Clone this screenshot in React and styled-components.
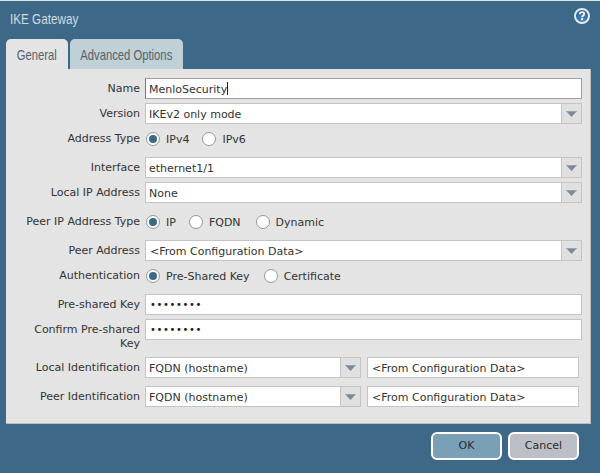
import { createGlobalStyle } from "styled-components";
import styled from "styled-components";

const GlobalStyle = createGlobalStyle`
  html, body {
    margin: 0;
    padding: 0;
    background: #3e6888;
  }
  body {
    font-family: "DejaVu Sans", sans-serif;
    font-size: 11px;
    color: #333;
  }
`;

const Dialog = styled.div`
  width: 600px;
  height: 473px;
  box-sizing: border-box;
  border-top: 1px solid #dfe6ea;
  background: #3e6888;
  overflow: hidden;
  display: flex;
  flex-direction: column;
`;

const Header = styled.div`
  height: 38px;
  padding: 0 10px;
  display: flex;
  justify-content: space-between;
  align-items: flex-start;
`;

// the original uses a condensed face, none is installed so squeeze Liberation Sans
const Narrow = styled.span`
  display: inline-block;
  flex: none;
  white-space: nowrap;
  font-family: "Liberation Sans", sans-serif;
  font-size: 15px;
  transform: scaleX(${(p) => (p.$left ? 0.78 : 0.75)});
  transform-origin: ${(p) => (p.$left ? "left center" : "center")};
`;

const Title = styled.div`
  line-height: 18px;
  margin-top: 9px;
  color: #cfdbe3;
`;

const HelpWrap = styled.div`
  width: 18px;
  height: 18px;
  margin-top: 6px;
  margin-right: -1px;
`;

const Tabs = styled.div`
  display: flex;
  gap: 2px;
  margin-left: 6px;
  height: 30px;
`;

const Tab = styled.div`
  height: 30px;
  width: ${(p) => p.$width}px;
  box-sizing: border-box;
  border-radius: 5px 5px 0 0;
  background: ${(p) => (p.$active ? "#e4e4e4" : "#c0d0d7")};
  color: #55626c;
  display: flex;
  align-items: center;
  justify-content: center;
`;

const Panel = styled.div`
  width: 585px;
  height: 355px;
  margin-left: 6px;
  box-sizing: border-box;
  background: #e4e4e4;
  border-right: 1px solid #bcbcbc;
  border-bottom: 1px solid #bcbcbc;
  padding-top: 9px;
  display: flex;
  flex-direction: column;
`;

const Row = styled.div`
  display: flex;
  align-items: ${(p) => (p.$top ? "flex-start" : "center")};
  margin-top: ${(p) => p.$mt || 0}px;
  height: ${(p) => p.$h || 21}px;
`;

const Label = styled.div`
  width: 134px;
  flex: none;
  box-sizing: border-box;
  text-align: right;
  line-height: 14px;
  padding-left: ${(p) => p.$indent || 0}px;
  margin-top: ${(p) => p.$mt || 0}px;
  color: #333;
`;

const Field = styled.div`
  margin-left: 5px;
  width: ${(p) => p.$width || 437}px;
  height: 21px;
  box-sizing: border-box;
  flex: none;
  display: flex;
  background: #fff;
  border: 1px solid ${(p) => (p.$focus ? "#a99a9e" : "#c4c4c4")};
  ${(p) => p.$focus && "border-left-color: #b5615c;"}
  padding-left: 3px;
  align-items: center;
  line-height: 19px;
`;

const Value = styled.span`
  flex: 1;
  white-space: nowrap;
  padding-left: ${(p) => p.$pad || 0}px;
  padding-top: ${(p) => p.$drop || 1}px;
`;

const Caret = styled.span`
  display: inline-block;
  width: 1px;
  height: 13px;
  background: #222;
  vertical-align: -2px;
`;

const Dots = styled.span`
  flex: 1;
  font-size: 10px;
  letter-spacing: 0.6px;
  line-height: 19px;
  padding-left: 1px;
  color: #222;
`;

const Arrow = styled.div`
  width: 20px;
  height: 19px;
  flex: none;
  box-sizing: border-box;
  border-left: 1px solid #c4c4c4;
  background: #e0e0e0;
  display: flex;
  align-items: center;
  justify-content: center;
`;

const Radios = styled.div`
  margin-left: 6px;
  display: flex;
  align-items: center;
`;

const RadioItem = styled.div`
  display: flex;
  align-items: center;
  padding-top: 1px;
  margin-right: ${(p) => p.$gap || 13}px;
`;

const RadioCircle = styled.span`
  width: 14px;
  height: 14px;
  box-sizing: border-box;
  border-radius: 50%;
  background: #fff;
  border: 1px solid #8f99a1;
  margin-right: 6px;
  display: flex;
  align-items: center;
  justify-content: center;
  &::after {
    content: "";
    display: ${(p) => (p.$on ? "block" : "none")};
    width: 8px;
    height: 8px;
    border-radius: 50%;
    background: #3e6888;
  }
`;

const TextBox = styled(Field)`
  margin-left: 6px;
`;

const Footer = styled.div`
  display: flex;
  justify-content: flex-end;
  gap: 6px;
  padding: 8px 21px 0 0;
`;

const Button = styled.div`
  width: 71px;
  height: 28px;
  box-sizing: border-box;
  border: 2px solid #fff;
  border-radius: 6px;
  background: ${(p) => (p.$primary ? "#7aa0b8" : "#bcc0c6")};
  color: #2b2b2b;
  text-align: center;
  line-height: 24px;
`;

function Triangle() {
  return (
    <svg width="11" height="6" viewBox="0 0 11 6">
      <path d="M0 0H11L5.5 6Z" fill="#7a8a98" />
      <path d="M0 0H11L10 1H1Z" fill="#98a2ab" />
    </svg>
  );
}

function HelpIcon() {
  return (
    <svg width="18" height="18" viewBox="0 0 18 18">
      <defs>
        <radialGradient id="helpFill" cx="50%" cy="70%" r="65%">
          <stop offset="0%" stopColor="#4a8cc2" />
          <stop offset="100%" stopColor="#1f5c96" />
        </radialGradient>
      </defs>
      <circle cx="9" cy="9" r="7" fill="url(#helpFill)" stroke="#e3edf3" strokeWidth="2" />
      <path
        d="M6.8 7.2C6.9 5.9 7.8 5.2 9.1 5.2C10.4 5.2 11.3 5.9 11.3 7C11.3 8.4 9.3 8.6 9.1 10.2"
        fill="none"
        stroke="#fff"
        strokeWidth="1.8"
      />
      <rect x="8.1" y="11.2" width="2" height="2" fill="#fff" />
    </svg>
  );
}

function Select({ value, width, pad }) {
  return (
    <Field $width={width}>
      <Value $pad={pad}>{value}</Value>
      <Arrow>
        <Triangle />
      </Arrow>
    </Field>
  );
}

function Radio({ on, label, gap }) {
  return (
    <RadioItem $gap={gap}>
      <RadioCircle $on={on} />
      {label}
    </RadioItem>
  );
}

export default function App() {
  return (
    <Dialog>
      <GlobalStyle />
      <Header>
        <Title>
          <Narrow $left>IKE Gateway</Narrow>
        </Title>
        <HelpWrap>
          <HelpIcon />
        </HelpWrap>
      </Header>
      <Tabs>
        <Tab $active $width={62}>
          <Narrow>General</Narrow>
        </Tab>
        <Tab $width={113}>
          <Narrow>Advanced Options</Narrow>
        </Tab>
      </Tabs>
      <Panel>
        <Row>
          <Label>Name</Label>
          <Field $focus>
            <Value>MenloSecurity<Caret /></Value>
          </Field>
        </Row>
        <Row $mt={4}>
          <Label>Version</Label>
          <Select value="IKEv2 only mode" />
        </Row>
        <Row $mt={4}>
          <Label>Address Type</Label>
          <Radios>
            <Radio on label="IPv4" />
            <Radio label="IPv6" />
          </Radios>
        </Row>
        <Row $mt={8}>
          <Label>Interface</Label>
          <Select value="ethernet1/1" />
        </Row>
        <Row $mt={4}>
          <Label>Local IP Address</Label>
          <Select value="None" />
        </Row>
        <Row $mt={8}>
          <Label>Peer IP Address Type</Label>
          <Radios>
            <Radio on label="IP" gap={13} />
            <Radio label="FQDN" gap={15} />
            <Radio label="Dynamic" />
          </Radios>
        </Row>
        <Row $mt={8}>
          <Label>Peer Address</Label>
          <Select value="<From Configuration Data>" pad={1} />
        </Row>
        <Row $mt={4}>
          <Label>Authentication</Label>
          <Radios>
            <Radio on label="Pre-Shared Key" gap={14} />
            <Radio label="Certificate" />
          </Radios>
        </Row>
        <Row $mt={8}>
          <Label>Pre-shared Key</Label>
          <Field>
            <Dots>••••••••</Dots>
          </Field>
        </Row>
        <Row $mt={4} $h={34} $top>
          <Label $mt={4} $indent={24}>Confirm Pre-shared Key</Label>
          <Field>
            <Dots>••••••••</Dots>
          </Field>
        </Row>
        <Row $mt={4}>
          <Label>Local Identification</Label>
          <Select value="FQDN (hostname)" width={216} />
          <TextBox $width={212}>
            <Value $pad={1}>{"<From Configuration Data>"}</Value>
          </TextBox>
        </Row>
        <Row $mt={8}>
          <Label>Peer Identification</Label>
          <Select value="FQDN (hostname)" width={216} />
          <TextBox $width={212}>
            <Value $pad={1} $drop={2}>{"<From Configuration Data>"}</Value>
          </TextBox>
        </Row>
      </Panel>
      <Footer>
        <Button $primary>OK</Button>
        <Button>Cancel</Button>
      </Footer>
    </Dialog>
  );
}
